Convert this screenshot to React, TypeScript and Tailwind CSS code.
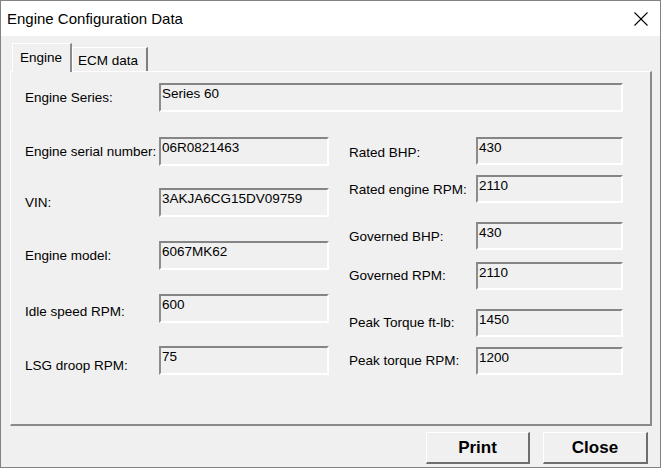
import React from "react";

function Field({ value, w, h }: { value: string; w: string; h: string }) {
  return (
    <div
      className={`${w} ${h} shrink-0 border-2 border-t-[#858585] border-l-[#8c8c8c] border-b-white border-r-white bg-[#f0f0f0] pl-[1px] pt-[1px] text-[13.5px] leading-[16px] text-black whitespace-nowrap`}
    >
      {value}
    </div>
  );
}

function LeftRow({ label, value, mt, lp }: { label: string; value: string; mt: string; lp: string }) {
  return (
    <div className={`flex items-center ${mt}`}>
      <div className={`w-[134px] shrink-0 whitespace-nowrap text-[13.5px] leading-[16px] ${lp}`}>{label}</div>
      <Field value={value} w="w-[170px]" h="h-[29px]" />
    </div>
  );
}

function RightRow({ label, value, mt, lp }: { label: string; value: string; mt: string; lp: string }) {
  return (
    <div className={`flex items-center ${mt}`}>
      <div className={`w-[127px] shrink-0 whitespace-nowrap text-[13.5px] leading-[16px] ${lp}`}>{label}</div>
      <Field value={value} w="w-[147px]" h="h-[28px]" />
    </div>
  );
}

export default function App() {
  return (
    <div className="w-[661px] h-[468px] border border-[#828282] bg-[#f0f0f0] flex flex-col font-['Liberation_Sans',Arial,sans-serif] text-black overflow-hidden">
      {/* Title bar */}
      <div className="h-[35px] shrink-0 bg-white flex items-center justify-between pl-[6px] pr-[12px]">
        <span className="text-[15px] leading-[18px] pt-[1px]">Engine Configuration Data</span>
        <svg width="14" height="14" viewBox="0 0 14 14" className="mt-[1px]">
          <line x1="0.5" y1="0.5" x2="13.5" y2="13.5" stroke="#000" strokeWidth="1.1" />
          <line x1="13.5" y1="0.5" x2="0.5" y2="13.5" stroke="#000" strokeWidth="1.1" />
        </svg>
      </div>

      {/* Body */}
      <div className="flex-1 flex flex-col pl-[9px] pr-[8px] pt-[7px]">
        {/* Tabs */}
        <div className="flex items-end ml-[2px]">
          <div className="relative -mb-px h-[29px] w-[60px] border-t border-l border-white border-r-2 border-r-[#8c8c8c] bg-[#f0f0f0] pl-[7px] pt-[6px] text-[13.5px] leading-[16px]">
            Engine
          </div>
          <div className="h-[24px] w-[76px] border-t border-l border-white border-r-2 border-r-[#7e7e7e] bg-[#f0f0f0] pl-[5px] pt-[5px] text-[13.5px] leading-[16px] whitespace-nowrap">
            ECM data
          </div>
        </div>

        {/* Panel */}
        <div className="h-[355px] w-[642px] border-t border-l border-white border-r-2 border-b-2 border-r-[#8a8a8a] border-b-[#8a8a8a] pl-[14px] pt-[11px]">
          <div className="flex items-center">
            <div className="w-[134px] shrink-0 whitespace-nowrap text-[13.5px] leading-[16px]">Engine Series:</div>
            <Field value="Series 60" w="w-[464px]" h="h-[29px]" />
          </div>

          <div className="flex mt-[25px]">
            <div className="flex flex-col w-[304px]">
              <LeftRow label="Engine serial number:" value="06R0821463" mt="" lp="" />
              <LeftRow label="VIN:" value="3AKJA6CG15DV09759" mt="mt-[22px]" lp="" />
              <LeftRow label="Engine model:" value="6067MK62" mt="mt-[24px]" lp="pt-[1px]" />
              <LeftRow label="Idle speed RPM:" value="600" mt="mt-[24px]" lp="pt-[6px]" />
              <LeftRow label="LSG droop RPM:" value="75" mt="mt-[23px]" lp="pt-[10px]" />
            </div>
            <div className="flex flex-col ml-[20px]">
              <RightRow label="Rated BHP:" value="430" mt="" lp="pt-[4px]" />
              <RightRow label="Rated engine RPM:" value="2110" mt="mt-[10px]" lp="pt-[2px]" />
              <RightRow label="Governed BHP:" value="430" mt="mt-[19px]" lp="pt-[2px]" />
              <RightRow label="Governed RPM:" value="2110" mt="mt-[12px]" lp="" />
              <RightRow label="Peak Torque ft-lb:" value="1450" mt="mt-[19px]" lp="" />
              <RightRow label="Peak torque RPM:" value="1200" mt="mt-[10px]" lp="" />
            </div>
          </div>
        </div>

        {/* Buttons */}
        <div className="flex justify-end gap-[13px] mt-[6px] pr-[4px]">
          <button className="h-[32px] w-[104px] border-t border-l border-white border-r-2 border-b-2 border-r-[#6e6e6e] border-b-[#6e6e6e] bg-[#f0f0f0] text-[17px] font-bold leading-[20px]">
            Print
          </button>
          <button className="h-[32px] w-[105px] border-t border-l border-white border-r-2 border-b-2 border-r-[#6e6e6e] border-b-[#6e6e6e] bg-[#f0f0f0] text-[17px] font-bold leading-[20px]">
            Close
          </button>
        </div>
      </div>
    </div>
  );
}
